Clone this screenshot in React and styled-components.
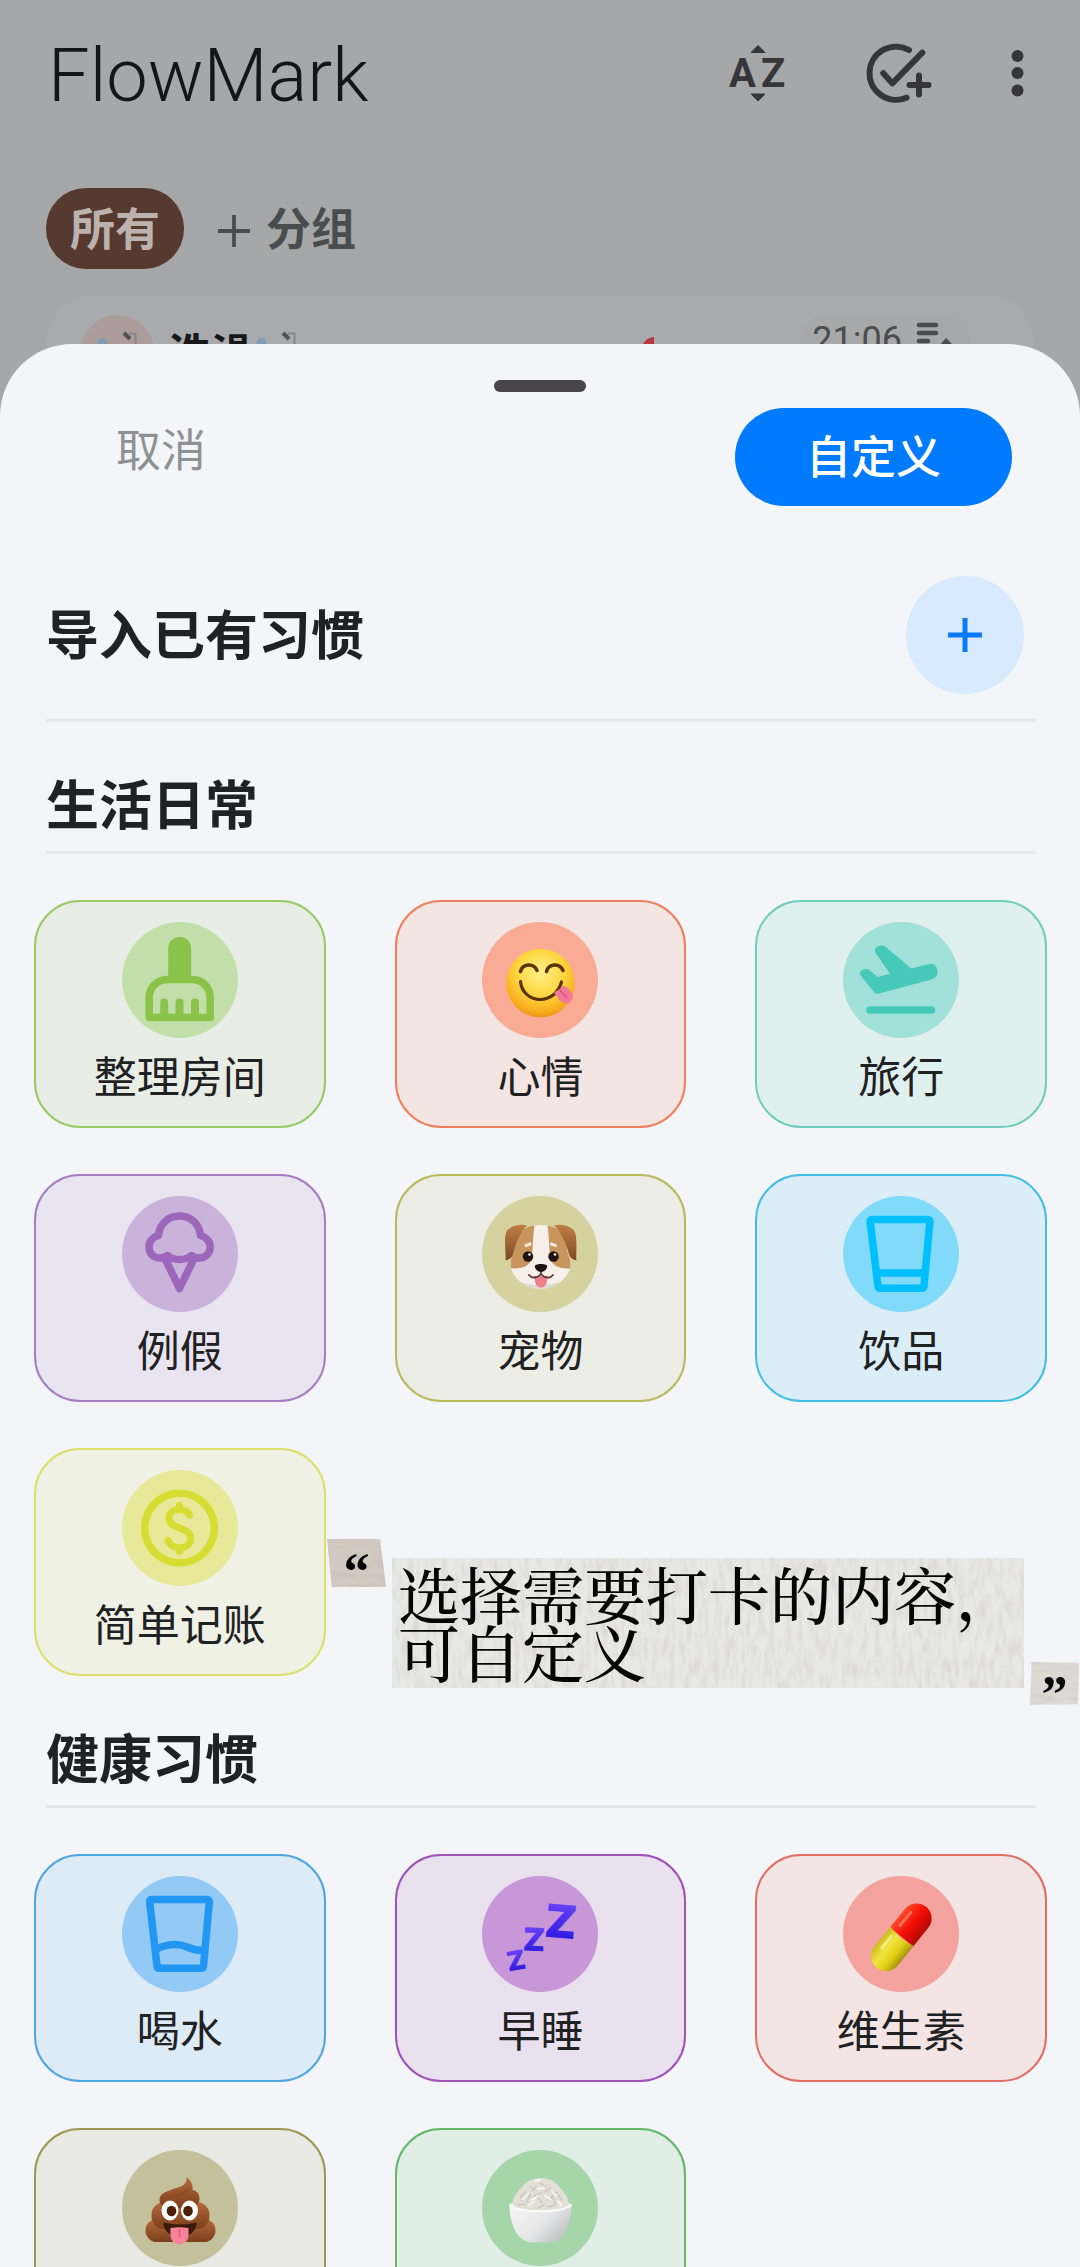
import React from "react";
import styled, { createGlobalStyle } from "styled-components";

const Global = createGlobalStyle`
  * { box-sizing: border-box; }
  body {
    margin: 0;
    background: #a5a7a8;
    font-family: Roboto, "Noto Sans CJK SC", sans-serif;
    color: #1f2123;
  }
  button {
    margin: 0;
    padding: 0;
    border: 0;
    background: none;
    color: inherit;
    font: inherit;
    cursor: pointer;
  }
  h1, h2, p { margin: 0; }
  svg { display: block; }
`;

const Screen = styled.div`
  height: 100vh;
  overflow: hidden;
  background: #a5a7a8;
`;

/* ---------- dimmed list behind the sheet ---------- */

const TopBar = styled.header`
  display: flex;
  align-items: center;
  justify-content: space-between;
  height: 146px;
  padding: 0 50px 0 48px;
`;

const AppName = styled.h1`
  padding-top: 6px;
  font-size: 74px;
  font-weight: 300;
  line-height: 88px;
  color: #141516;
`;

const Actions = styled.div`
  display: flex;
  align-items: center;
  gap: 70px;
  color: #35353a;
`;

const Groups = styled.nav`
  display: flex;
  align-items: center;
  gap: 34px;
  padding: 42px 46px 26px;
`;

const GroupChip = styled.button`
  height: 81px;
  padding: 4px 24px 0;
  border-radius: 40px;
  background: #56392f;
  color: #bcb3b0;
  font-size: 45px;
  font-weight: 700;
  line-height: 77px;
`;

const AddGroup = styled.button`
  display: flex;
  align-items: center;
  gap: 16px;
  padding-top: 4px;
  color: #4a4d4d;
  font-size: 45px;
  font-weight: 700;
  line-height: 77px;
`;

const HabitCard = styled.article`
  display: flex;
  align-items: center;
  margin: 0 46px;
  padding: 20px 64px 28px 35px;
  border-radius: 48px;
  background: #a8aaad;
`;

const Avatar = styled.div`
  display: grid;
  place-items: center;
  width: 73px;
  height: 73px;
  margin-right: 14px;
  border-radius: 50%;
  background: #ab9c9a;
`;

const HabitName = styled.h2`
  padding-top: 6px;
  font-size: 43px;
  font-weight: 700;
  line-height: 60px;
  color: #161718;
`;

const Streak = styled.div`
  width: 160px;
  margin-left: auto;
`;

const TimePill = styled.div`
  display: flex;
  align-items: center;
  align-self: flex-start;
  gap: 14px;
  height: 50px;
  padding: 0 16px 0 12px;
  border-radius: 25px;
  background: #a6a8a9;
  color: #4b4d4e;
  font-size: 36px;
  line-height: 50px;
`;

/* ---------- bottom sheet ---------- */

const Sheet = styled.main`
  position: relative;
  margin-top: -72px;
  border-radius: 72px 72px 0 0;
  background: #f3f5f9;
`;

const Handle = styled.div`
  display: flex;
  justify-content: center;
  padding: 36px 0 16px;

  &::before {
    content: "";
    width: 92px;
    height: 12px;
    border-radius: 6px;
    background: #49454f;
  }
`;

const SheetActions = styled.div`
  display: flex;
  align-items: flex-start;
  justify-content: space-between;
  padding: 0 68px 0 116px;
`;

const Cancel = styled.button`
  font-size: 45px;
  line-height: 88px;
  color: #8e9194;
`;

const Customize = styled.button`
  padding: 4px 71px 0;
  border-radius: 49px;
  background: #007bff;
  color: #fff;
  font-size: 45px;
  font-weight: 500;
  line-height: 94px;
`;

const Heading = styled.h2`
  padding-top: 4px;
  font-size: 53px;
  font-weight: 700;
  line-height: 66px;
  color: #1f2123;
`;

const ImportRow = styled.div`
  display: flex;
  align-items: center;
  justify-content: space-between;
  margin: 0 44px 0 46px;
  padding: 70px 12px 25px 0;
  border-bottom: 3px solid #e4e7eb;
`;

const ImportButton = styled.button`
  display: grid;
  place-items: center;
  width: 118px;
  height: 118px;
  border-radius: 50%;
  background: #d8eafd;
  color: #0a7bf7;
`;

const Section = styled.section`
  padding-top: 48px;
`;

const SectionHead = styled.div`
  margin: 0 44px 0 46px;
  padding-bottom: 11px;
  border-bottom: 3px solid #e4e7eb;
`;

const Grid = styled.div`
  position: relative;
  display: grid;
  grid-template-columns: repeat(3, 1fr);
  gap: 46px 69px;
  padding: 0 33px 0 34px;
  margin-top: 46px;
`;

const Tile = styled.button`
  display: flex;
  flex-direction: column;
  align-items: center;
  min-height: 228px;
  padding-top: 20px;
  border: 2px solid ${(p) => p.$line};
  border-radius: 46px;
  background: ${(p) => p.$fill};
`;

const Badge = styled.span`
  width: 116px;
  height: 116px;
  border-radius: 50%;
  background: ${(p) => p.$disc};
  color: ${(p) => p.$ink || "inherit"};
`;

const TileLabel = styled.span`
  margin-top: 12px;
  font-size: 43px;
  line-height: 56px;
`;

/* ---------- clipped-paper caption laid over the grid ---------- */

const Caption = styled.blockquote`
  position: absolute;
  left: 327px;
  right: 3px;
  bottom: -29px;
  display: flex;
  align-items: flex-start;
  gap: 6px;
  margin: 0;
  color: #050505;
`;

const Scrap = styled.span`
  position: relative;
  flex: none;
  width: ${(p) => (p.$end ? 49 : 59)}px;
  height: ${(p) => (p.$end ? 43 : 48)}px;
  align-self: ${(p) => (p.$end ? "flex-end" : "flex-start")};
`;

const Mark = styled.span`
  position: relative;
  display: block;
  font-family: "Liberation Serif", serif;
  font-size: 52px;
  font-weight: 700;
  line-height: 66px;
  text-align: center;
`;

const Paper = styled.div`
  position: relative;
  flex: 1;
  margin: 19px 0 17px;
  padding: 7px 6px;
`;

const CaptionText = styled.p`
  position: relative;
  font-family: "Noto Serif CJK SC", "Noto Sans CJK SC", serif;
  font-size: 62px;
  font-weight: 500;
  line-height: 58px;
  white-space: nowrap;
`;

const Fibres = styled.svg`
  position: absolute;
  inset: 0;
  width: 100%;
  height: 100%;
  background: ${(p) => p.$tone};
  clip-path: ${(p) => p.$cut || "none"};
`;

function PaperGrain({ id, freq, tone, cut }) {
  return (
    <Fibres aria-hidden="true" $tone={tone} $cut={cut}>
      <filter id={id} x="0" y="0" width="100%" height="100%">
        <feTurbulence type="fractalNoise" baseFrequency={freq} numOctaves="4" seed="4" />
        <feColorMatrix values="0 0 0 0 0.45  0 0 0 0 0.43  0 0 0 0 0.4  0.6 0 0 0 -0.24" />
      </filter>
      <rect width="100%" height="100%" filter={`url(#${id})`} />
    </Fibres>
  );
}

/* ---------- toolbar drawings ---------- */

const SortIcon = () => (
  <svg width="72" height="72" viewBox="0 0 72 72" fill="currentColor" aria-hidden="true">
    <path d="M38 8.500l7 7h-14zM38 64l7-7h-14z" stroke="currentColor" strokeWidth="1" strokeLinejoin="round" />
    <text x="9" y="50" fontFamily="Roboto" fontWeight="700" fontSize="40">A</text>
    <text x="41" y="50" fontFamily="Roboto" fontWeight="700" fontSize="40">Z</text>
  </svg>
);

const CheckAddIcon = () => (
  <svg width="72" height="72" viewBox="0 0 72 72" fill="none" stroke="currentColor" strokeWidth="6" strokeLinecap="round" strokeLinejoin="round" aria-hidden="true">
    <path d="M47 13A26.600 26.600 0 1 0 44.500 60.700" />
    <path d="M21.300 36.300l9 10L60.300 15.700M57 38.500v19M47.500 48h19" />
  </svg>
);

const MoreIcon = () => (
  <svg width="26" height="72" viewBox="0 0 26 72" fill="currentColor" aria-hidden="true">
    <circle cx="13.500" cy="19" r="6" />
    <circle cx="13.500" cy="36" r="6" />
    <circle cx="13.500" cy="53.500" r="6" />
  </svg>
);

const PlusIcon = ({ size, weight }) => (
  <svg width={size} height={size} viewBox="0 0 34 34" stroke="currentColor" strokeWidth={weight} aria-hidden="true">
    <path d="M17 0v34M0 17h34" />
  </svg>
);

const BathIcon = () => (
  <svg width="46" height="46" viewBox="0 0 46 46" aria-hidden="true">
    <circle cx="7.500" cy="14" r="5" fill="#7f9cb4" />
    <path d="M34 4.500h6.500V30" fill="none" stroke="#858789" strokeWidth="2" />
    <path d="M29 4l6 6" stroke="#505255" strokeWidth="4" />
    <path d="M3 24h40c0 12-6 18-20 18S3 36 3 24z" fill="#b8babc" />
  </svg>
);

const NoteIcon = () => (
  <svg width="38" height="40" viewBox="0 0 38 40" fill="none" stroke="currentColor" strokeWidth="4.500" strokeLinecap="round" aria-hidden="true">
    <path d="M3 5h17M3 13h17M3 21h9" />
    <path d="M22 27l8-9 6 6-9 9z" fill="currentColor" stroke="none" />
  </svg>
);

/* ---------- habit drawings, all on a 116 grid ---------- */

const Art = ({ children, ...rest }) => (
  <svg width="116" height="116" viewBox="0 0 116 116" aria-hidden="true" {...rest}>
    {children}
  </svg>
);

const line = {
  fill: "none",
  stroke: "currentColor",
  strokeWidth: 7.5,
  strokeLinecap: "round",
  strokeLinejoin: "round",
};

const Broom = () => (
  <Art {...line}>
    <path d="M46.200 56V26.500a11.500 11.500 0 0 1 23 0V56z" fill="currentColor" stroke="none" />
    <path d="M27.200 95.400V75.500a18 18 0 0 1 18-18h25a18 18 0 0 1 18 18v19.900z" />
    <path d="M42.200 80.500V94M57.500 80.500V94M73 80.500V94" strokeWidth="8" />
  </Art>
);

const Plane = () => (
  <Art {...line}>
    <path
      d="M34 30.500C32 27 35 25.500 38 25c1.500 0 2.500 0 3.500 1L68 48.200l18-4.700c3.500-1 6.500 1.500 7 4.500.8 3.500-1 7-5 8L36 70c-2 .6-3.500 0-4.500-1.800L19 53c-1.500-2.500 0-4 3-4.500 1.500-.2 3 0 4 1l8 7.200 15.500-4z"
      fill="currentColor"
      strokeWidth="3"
    />
    <path d="M27 88h61.500" />
  </Art>
);

const IceCream = () => (
  <Art {...line}>
    <path d="M36.500 39.300C37.500 28 46 20 57.500 20S77.500 28 78.500 39.300C84 41 88.200 45.500 88.200 51.300 88.200 57.500 83 62 77 62c-3 0-5.500-1-7.500-2.500-3.500 3-8 4-12 4s-8.500-1-12-4C43.500 61 41 62 38 62c-6 0-11-4.500-11-10.700 0-5.800 3.500-10.300 9.500-12z" />
    <path d="M43.500 63.500L57.500 92.500 71.500 63.500" />
  </Art>
);

const Tumbler = () => (
  <Art {...line}>
    <path d="M29.500 23.500h55q2.500 0 2.300 2.500L81 90q-.3 2.300-2.500 2.300h-41q-2.200 0-2.500-2.300L27.200 26q-.2-2.500 2.300-2.500zM34 77h47" />
  </Art>
);

const Water = () => (
  <Art {...line}>
    <path d="M29.500 23.500h55.500q2.500 0 2.300 2.500L81.500 90q-.3 2.300-2.500 2.300h-41.500q-2.200 0-2.500-2.300L27.700 26q-.2-2.500 1.800-2.500zM34 73c14-6 24-5 31-2 6 2.500 11 3.500 16.500 3.500" />
  </Art>
);

const Coin = () => (
  <Art {...line}>
    <circle cx="57.500" cy="58" r="34.800" />
    <path
      strokeWidth="7"
      d="M67.500 45C65.500 41 62 39.500 57.500 39.500 51.500 39.500 47 42.500 47 48c0 6 5 8 10.500 10C64 60.300 68.500 62.500 68.500 69c0 5.500-5 8.700-11 8.700-5.500 0-9.500-2.200-11.500-7.200M57.500 35.500v4M57.500 78v3.500"
    />
  </Art>
);

const Yum = () => (
  <Art>
    <defs>
      <radialGradient id="yum" cx="0.5" cy="0.35" r="0.68">
        <stop offset="0" stopColor="#fff08a" />
        <stop offset="0.5" stopColor="#fdd63f" />
        <stop offset="0.85" stopColor="#f8ab1c" />
        <stop offset="1" stopColor="#e58a14" />
      </radialGradient>
    </defs>
    <circle cx="58.500" cy="61" r="34.300" fill="url(#yum)" />
    <g fill="none" stroke="#5c3208" strokeLinecap="round">
      <path d="M38.500 49.500c2-8 13-9 16.500-1M64.500 49.500c2-8 13-9 16.500-1" strokeWidth="3.500" />
      <path d="M38.500 59.500c1 11 9.500 18 20 18 9 0 18-6 21-17.500" strokeWidth="3.200" />
    </g>
    <path d="M79.500 64c6-1 13 7 11 13-2.500 6-11 5.500-15-1.500-1.500-2.500-3-4-3.500-5 3-1.500 6-3 7.500-6.500z" fill="#f2789a" />
    <path d="M78 68.500l7 7" stroke="#d9567c" strokeWidth="1.500" strokeLinecap="round" />
  </Art>
);

const Dog = () => (
  <Art>
    <defs>
      <linearGradient id="ear" x1="0" y1="0" x2="0" y2="1">
        <stop offset="0" stopColor="#c07f45" />
        <stop offset="1" stopColor="#7d4a23" />
      </linearGradient>
      <clipPath id="head">
        <path d="M58.500 29c20 0 26 12 27 27 6 14 2 22-6 29-5 5-13 8-21 8s-16-3-21-8c-8-7-12-15-6-29 1-15 7-27 27-27z" />
      </clipPath>
    </defs>
    <g clipPath="url(#head)">
      <rect x="24" y="26" width="70" height="70" fill="#f6efea" />
      <path d="M24 26h29c-2 12-2 22-3 34-1 10-9 14-26 12z" fill="#c8955e" />
      <path d="M94 26H65c2 12 2 22 3 34 1 10 9 14 26 12z" fill="#c8955e" />
      <path d="M28 80c12 12 49 12 61 0v20H28z" fill="#d6c8c2" opacity=".6" />
    </g>
    <path d="M45 29.500c-6-1.500-13-.5-19 4-5 4-2 20-2.500 31 3.500-1 6.500-2 8-8 2-8 6-20 13.500-27z" fill="url(#ear)" />
    <path d="M72 29.500c6-1.500 13-.5 19 4 5 4 3 20 3.500 31-3.500-1-6.500-2-8-8-2-8-7-20-14.500-27z" fill="url(#ear)" />
    <circle cx="46" cy="60.500" r="5.200" fill="#20140f" />
    <circle cx="71.500" cy="60.500" r="5.200" fill="#20140f" />
    <circle cx="47.500" cy="58.500" r="1.300" fill="#fff" />
    <circle cx="73" cy="58.500" r="1.300" fill="#fff" />
    <path d="M44 49.500l4-1.500M69.500 48l4 1.500" stroke="#f7e9dc" strokeWidth="3" strokeLinecap="round" />
    <path d="M52.500 80h13c0 7-2 11.500-6.500 11.500S52.500 87 52.500 80z" fill="#ee7f8b" />
    <path d="M59 73v5c-3 4-9 5-12 1M59 78c3 4 9 5 12 1" fill="none" stroke="#55392d" strokeWidth="1.800" strokeLinecap="round" />
    <path d="M53 69.500c2-2 10-2 12 0 1 3-3 6.500-6 6.500s-7-3.500-6-6.500z" fill="#1d1413" />
  </Art>
);

const Snooze = () => (
  <Art>
    <defs>
      <linearGradient id="zzz" x1="0" y1="0" x2="0" y2="1">
        <stop offset="0" stopColor="#7a4dff" />
        <stop offset="1" stopColor="#1d10d8" />
      </linearGradient>
    </defs>
    <g fill="url(#zzz)" fontFamily="Inter" fontWeight="900" textAnchor="middle">
      <text x="79" y="62" fontSize="46" transform="rotate(5 79 45)">Z</text>
      <text x="52" y="75" fontSize="32" transform="rotate(2 52 63)">Z</text>
      <text x="34" y="94" fontSize="27" transform="rotate(-10 34 84)">Z</text>
    </g>
  </Art>
);

const Pill = () => (
  <Art>
    <defs>
      <linearGradient id="pillRed" x1="0" x2="1">
        <stop offset="0" stopColor="#ff4a2a" />
        <stop offset="0.5" stopColor="#f40d05" />
        <stop offset="1" stopColor="#b30a06" />
      </linearGradient>
      <linearGradient id="pillYellow" x1="0" x2="1">
        <stop offset="0" stopColor="#c9bd1d" />
        <stop offset="0.35" stopColor="#f2e541" />
        <stop offset="0.7" stopColor="#e0cd12" />
        <stop offset="1" stopColor="#a39410" />
      </linearGradient>
    </defs>
    <g transform="rotate(39 58.400 61.200)">
      <path d="M43.400 61V37a15 15 0 0 1 30 0v24z" fill="url(#pillRed)" />
      <path d="M43.400 60v25.500a15 15 0 0 0 30 0V60c-8 3-22 3-30 0z" fill="url(#pillYellow)" />
      <path d="M50 36v17" stroke="#ff9a80" strokeWidth="3" strokeLinecap="round" opacity=".6" />
      <path d="M50 67v15" stroke="#fff8a8" strokeWidth="3" strokeLinecap="round" opacity=".7" />
    </g>
  </Art>
);

const Poop = () => (
  <Art>
    <defs>
      <linearGradient id="poo" x1="0" y1="0" x2="0" y2="1">
        <stop offset="0" stopColor="#b36a3b" />
        <stop offset="1" stopColor="#7c3e1b" />
      </linearGradient>
    </defs>
    <rect x="23.500" y="69" width="70" height="23" rx="11.500" fill="url(#poo)" />
    <rect x="29.500" y="52" width="58" height="27" rx="13" fill="url(#poo)" />
    <path d="M64.500 27c1 6-3 9-10 11-9 3-17 5-17 12 0 6 6 8 20 8s20-3 20-9c0-5-2-8-7-9 1-5-2-10-6-13z" fill="url(#poo)" />
    <path d="M41 48c7-1 18-2 25-8" fill="none" stroke="#8a4a24" strokeWidth="2" strokeLinecap="round" />
    <ellipse cx="48" cy="60.500" rx="8.500" ry="10" fill="#fff" />
    <ellipse cx="67.500" cy="60.500" rx="8.500" ry="10" fill="#fff" />
    <ellipse cx="49.500" cy="61" rx="4.800" ry="5.300" fill="#4a2108" />
    <ellipse cx="66" cy="61" rx="4.800" ry="5.300" fill="#4a2108" />
    <path d="M41.500 72.500c10 2.500 23 2.500 33 0 0 8-6 14.500-16.500 14.500S41.500 80.500 41.500 72.500z" fill="#3d1a0c" />
    <path d="M48.500 78c6-1 12-1 18 0v7.500a9 9 0 0 1-18 0z" fill="#f7839b" />
    <path d="M57.500 79v8" stroke="#dd5b7b" strokeWidth="1.500" />
  </Art>
);

const Rice = () => (
  <Art>
    <defs>
      <linearGradient id="bowl" x1="0" y1="0" x2="1" y2="0.6">
        <stop offset="0" stopColor="#f7f7f7" />
        <stop offset="0.6" stopColor="#e6e6e7" />
        <stop offset="1" stopColor="#c2c4c6" />
      </linearGradient>
    </defs>
    <ellipse cx="58.500" cy="56" rx="31" ry="7" fill="#f1f1f0" />
    <path d="M30.500 55c0-10 7-15 11-20 5-5 10-7 17-7s13 2 17 7c5 5 11 10 11 20-4 7-50 8-56 0z" fill="#e3dfd6" />
    <path
      d="M38 48l5-6M45 52l3-8M52 46l7-3M60 53l-5-6M66 50l6-5M74 54l-4-8M48 37l6 3M58 33l6 4M69 38l-6 4M80 50l-4-5M36 55l7-1M56 58l6-3M43 45l6 2M66 57l7-2M54 36l-4 5M76 42l-5 1"
      stroke="#cdc7bc"
      strokeWidth="1.500"
      strokeLinecap="round"
    />
    <path d="M41 49l5-5M50 50l6-4M63 46l5 3M56 39l6-1M70 41l4 5M47 55l5-3M76 51l3 4M53 31l5-1" stroke="#f8f6f1" strokeWidth="2" strokeLinecap="round" />
    <path d="M27.500 55c9 9 53 9 62 0 0 17-7 37-22 37.500H50C34.500 92 27.500 72 27.500 55z" fill="url(#bowl)" />
    <path d="M27.500 54.500c9 9 53 9 62 0" fill="none" stroke="#fafafa" strokeWidth="2" />
  </Art>
);

/* ---------- content ---------- */

const daily = [
  { label: "整理房间", art: Broom, ink: "#8bc34a", disc: "#c3dfa9", fill: "#e8eee6", edge: "#98cb68" },
  { label: "心情", art: Yum, disc: "#f9ab95", fill: "#f3e5e2", edge: "#ef7f5e" },
  { label: "旅行", art: Plane, ink: "#46c9b8", disc: "#a2e1da", fill: "#e0f0ee", edge: "#6fcdbe" },
  { label: "例假", art: IceCream, ink: "#9c66bb", disc: "#cab3db", fill: "#e8e5f0", edge: "#a67dc2" },
  { label: "宠物", art: Dog, disc: "#d5d29f", fill: "#ecede4", edge: "#b9b95e" },
  { label: "饮品", art: Tumbler, ink: "#00bfff", disc: "#82dafb", fill: "#dbeef7", edge: "#42bde3" },
  { label: "简单记账", art: Coin, ink: "#d6dc32", disc: "#e7e999", fill: "#eff1e4", edge: "#dbe06c" },
];

const health = [
  { label: "喝水", art: Water, ink: "#2196f3", disc: "#93c9f5", fill: "#dcebf6", edge: "#52a6e0" },
  { label: "早睡", art: Snooze, disc: "#c897d7", fill: "#e9e1ed", edge: "#9f52b8" },
  { label: "维生素", art: Pill, disc: "#f3a29d", fill: "#f2e5e4", edge: "#e16d64" },
  { name: "排便", art: Poop, disc: "#c4c09c", fill: "#e9eae4", edge: "#9d9853" },
  { name: "吃饭", art: Rice, disc: "#a4d6aa", fill: "#e0eee6", edge: "#63b76b" },
];

function HabitTile({ habit }) {
  const Drawing = habit.art;
  return (
    <Tile type="button" $line={habit.edge} $fill={habit.fill} aria-label={habit.name}>
      <Badge $disc={habit.disc} $ink={habit.ink}>
        <Drawing />
      </Badge>
      {habit.label && <TileLabel>{habit.label}</TileLabel>}
    </Tile>
  );
}

function HabitSection({ title, habits, children }) {
  return (
    <Section>
      <SectionHead>
        <Heading>{title}</Heading>
      </SectionHead>
      <Grid>
        {habits.map((habit) => (
          <HabitTile key={habit.label || habit.name} habit={habit} />
        ))}
        {children}
      </Grid>
    </Section>
  );
}

export default function App() {
  return (
    <Screen>
      <Global />
      <TopBar>
        <AppName>FlowMark</AppName>
        <Actions>
          <button type="button" aria-label="排序"><SortIcon /></button>
          <button type="button" aria-label="添加习惯"><CheckAddIcon /></button>
          <button type="button" aria-label="更多"><MoreIcon /></button>
        </Actions>
      </TopBar>
      <Groups>
        <GroupChip type="button">所有</GroupChip>
        <AddGroup type="button">
          <PlusIcon size={32} weight={4} />
          分组
        </AddGroup>
      </Groups>
      <HabitCard>
        <Avatar><BathIcon /></Avatar>
        <HabitName>洗澡</HabitName>
        <BathIcon />
        <Streak>
          <svg width="36" height="36" viewBox="0 0 36 36" aria-hidden="true">
            <path d="M14 3c-4 0-9 3-11 7v20h11z" fill="#b5383c" />
          </svg>
        </Streak>
        <TimePill>
          21:06
          <NoteIcon />
        </TimePill>
      </HabitCard>

      <Sheet>
        <Handle />
        <SheetActions>
          <Cancel type="button">取消</Cancel>
          <Customize type="button">自定义</Customize>
        </SheetActions>
        <ImportRow>
          <Heading>导入已有习惯</Heading>
          <ImportButton type="button" aria-label="导入已有习惯">
            <PlusIcon size={34} weight={5} />
          </ImportButton>
        </ImportRow>
        <HabitSection title="生活日常" habits={daily}>
          <Caption>
            <Scrap>
              <PaperGrain
                id="grain-open"
                freq="0.04 0.2"
                tone="#d2c9c1"
                cut="polygon(0 0, 90% 0, 100% 100%, 8% 100%)"
              />
              <Mark>“</Mark>
            </Scrap>
            <Paper>
              <PaperGrain id="grain-paper" freq="0.18 0.05" tone="#e8e8e6" />
              <CaptionText>
                选择需要打卡的内容，
                <br />
                可自定义
              </CaptionText>
            </Paper>
            <Scrap $end>
              <PaperGrain
                id="grain-close"
                freq="0.04 0.2"
                tone="#dedad3"
                cut="polygon(3% 0, 100% 2%, 98% 98%, 0 100%)"
              />
              <Mark>”</Mark>
            </Scrap>
          </Caption>
        </HabitSection>
        <HabitSection title="健康习惯" habits={health} />
      </Sheet>
    </Screen>
  );
}
